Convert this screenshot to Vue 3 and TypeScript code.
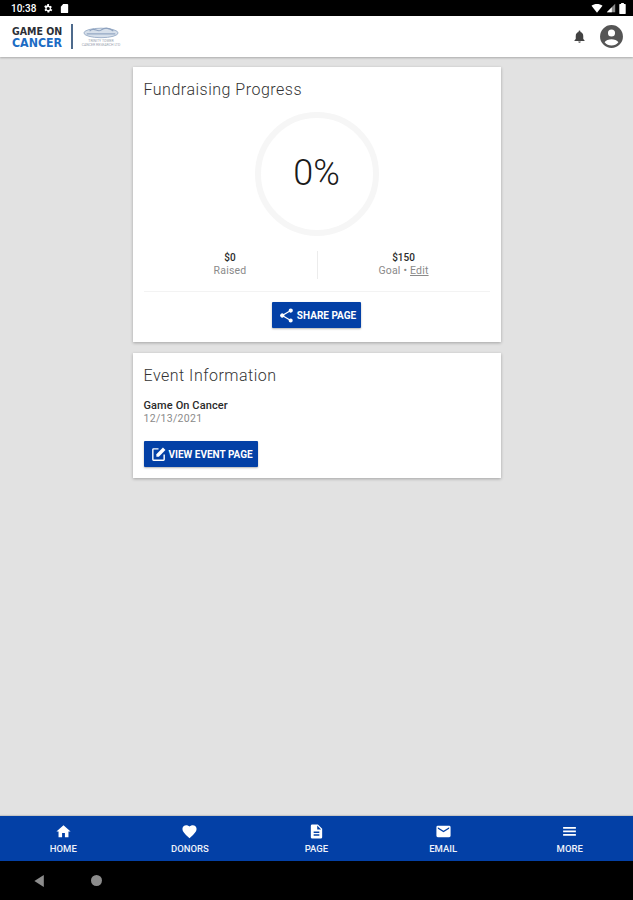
<template>
  <div class="screen">
    <div class="status-bar">
      <span class="clock">10:38</span>
      <svg class="status-icon" viewBox="0 0 24 24" width="11" height="11">
        <path fill="#fff" d="M19.4 13c0-.3.1-.6.1-1s0-.7-.1-1l2.100-1.600-2-3.500-2.500 1c-.5-.4-1.100-.7-1.700-1L15.500 2.300h-4l-.4 2.600c-.6.3-1.200.6-1.700 1l-2.500-1-2 3.500L7.500 11c0 .3-.1.600-.1 1s0 .7.100 1l-2.100 1.600 2 3.500 2.500-1c.5.4 1.100.7 1.700 1l.4 2.600h4l.4-2.600c.6-.3 1.200-.6 1.700-1l2.500 1 2-3.500zM13.500 15.500a3.500 3.500 0 1 1 0-7 3.500 3.500 0 0 1 0 7z" />
      </svg>
      <svg class="status-icon" viewBox="0 0 24 24" width="11" height="11">
        <path fill="#fff" d="M9 2h9a2 2 0 0 1 2 2v16a2 2 0 0 1-2 2H6a2 2 0 0 1-2-2V8z" />
      </svg>
      <span class="status-right">
        <svg viewBox="0 0 24 24" width="12" height="11">
          <path fill="#fff" d="M12 21 0 6c3.300-2.600 7.500-4 12-4s8.700 1.400 12 4z" />
        </svg>
        <svg viewBox="0 0 24 24" width="10" height="10">
          <path fill="#8a8a8a" d="M22 2v20H2z" />
          <path fill="#fff" d="M14 10v12H2z" />
        </svg>
        <svg viewBox="0 0 14 24" width="7" height="11">
          <path fill="#fff" d="M4 0h6v2h3a1 1 0 0 1 1 1v20a1 1 0 0 1-1 1H1a1 1 0 0 1-1-1V3a1 1 0 0 1 1-1h3z" />
        </svg>
      </span>
    </div>

    <header class="app-bar">
      <div class="logo">
        <div class="logo-words">
          <div class="logo-game">GAME ON</div>
          <div class="logo-cancer">CANCER</div>
        </div>
        <span class="logo-rule"></span>
        <div class="logo-partner">
          <svg viewBox="0 0 40 14" width="38" height="14">
            <ellipse cx="20" cy="8" rx="18" ry="5" fill="#d6dfea" stroke="#9db0c9" stroke-width="1" />
            <path d="M8 6c5-5 8 2 12-1s8-3 13 1" fill="none" stroke="#8ea2bf" stroke-width="1.200" />
            <path d="M5 9h30" stroke="#8097b7" stroke-width="1" />
          </svg>
          <div class="logo-small">TRINITY TOWER</div>
          <div class="logo-small">CANCER RESEARCH LTD</div>
        </div>
      </div>
      <div class="bar-actions">
        <svg viewBox="0 0 24 24" width="15" height="15">
          <path fill="#424242" d="M12 22a2 2 0 0 0 2-2h-4a2 2 0 0 0 2 2zm6-6v-5c0-3.100-1.600-5.600-4.500-6.300V4a1.500 1.500 0 0 0-3 0v.7C7.600 5.400 6 7.900 6 11v5l-2 2v1h16v-1z" />
        </svg>
        <svg viewBox="0 0 24 24" width="25" height="25">
          <path fill="#555" d="M12 1a11 11 0 1 0 0 22 11 11 0 0 0 0-22zm0 4.300a3.400 3.400 0 1 1 0 6.800 3.400 3.400 0 0 1 0-6.800zm0 15.300a8.600 8.600 0 0 1-6.600-3.100c.9-1.800 4.100-2.800 6.600-2.800s5.700 1 6.600 2.800a8.600 8.600 0 0 1-6.600 3.100z" />
        </svg>
      </div>
    </header>

    <main class="content">
      <section class="card">
        <h2 class="card-title">Fundraising Progress</h2>
        <div class="ring-wrap">
          <div class="ring">0%</div>
        </div>
        <div class="stats">
          <div class="stat">
            <div class="stat-value">$0</div>
            <div class="stat-label">Raised</div>
          </div>
          <div class="stat">
            <div class="stat-value">$150</div>
            <div class="stat-label">Goal • <span class="edit">Edit</span></div>
          </div>
        </div>
        <div class="share-row">
          <button class="btn">
            <svg viewBox="0 0 24 24" width="17" height="17">
              <path fill="#fff" d="M18 16.100c-.8 0-1.400.3-2 .8l-7.100-4.200c.1-.2.100-.5.100-.7s0-.5-.1-.7L16 7.200c.5.5 1.200.8 2 .8a3 3 0 1 0-3-3c0 .2 0 .5.100.7L8 9.800A3 3 0 1 0 8 14.200l7.100 4.200c-.1.200-.1.400-.1.600a2.900 2.900 0 1 0 3-2.900z" />
            </svg>
            <span>SHARE PAGE</span>
          </button>
        </div>
      </section>

      <section class="card card-event">
        <h2 class="card-title">Event Information</h2>
        <div class="event-name">Game On Cancer</div>
        <div class="event-date">12/13/2021</div>
        <button class="btn btn-event">
          <svg viewBox="0 0 24 24" width="17" height="17">
            <path fill="#fff" d="M19 19H5V5h7V3H5a2 2 0 0 0-2 2v14a2 2 0 0 0 2 2h14a2 2 0 0 0 2-2v-7h-2z" />
            <path fill="#fff" d="M9 15v-3.500L18.300 2.200l3.500 3.500L12.500 15z" />
          </svg>
          <span>VIEW EVENT PAGE</span>
        </button>
      </section>
    </main>

    <nav class="bottom-nav">
      <div v-for="item in navItems" :key="item.label" class="nav-item">
        <svg viewBox="0 0 24 24" width="17" height="17">
          <path fill="#fff" :d="item.path" />
        </svg>
        <span>{{ item.label }}</span>
      </div>
    </nav>

    <div class="system-nav">
      <svg viewBox="0 0 12 14" width="11" height="12">
        <path fill="#8c8c8c" d="M11 0v14L0 7z" />
      </svg>
      <span class="home-dot"></span>
    </div>
  </div>
</template>

<script setup lang="ts">
const navItems = [
  { label: "HOME", path: "M10 20v-6h4v6h5v-8h3L12 3 2 12h3v8z" },
  {
    label: "DONORS",
    path: "M12 21.400 10.500 20C5.400 15.400 2 12.300 2 8.500 2 5.400 4.400 3 7.500 3c1.700 0 3.400.8 4.500 2.100C13.100 3.800 14.800 3 16.500 3 19.600 3 22 5.400 22 8.500c0 3.800-3.400 6.900-8.500 11.500z",
  },
  {
    label: "PAGE",
    path: "M14 2H6a2 2 0 0 0-2 2v16a2 2 0 0 0 2 2h12a2 2 0 0 0 2-2V8zm2 16H8v-2h8zm0-4H8v-2h8zm-3-5V3.500L18.500 9z",
  },
  {
    label: "EMAIL",
    path: "M20 4H4a2 2 0 0 0-2 2v12a2 2 0 0 0 2 2h16a2 2 0 0 0 2-2V6a2 2 0 0 0-2-2zm0 4-8 5-8-5V6l8 5 8-5z",
  },
  { label: "MORE", path: "M3 18h18v-2.500H3zm0-5h18v-2.500H3zM3 5.500V8h18V5.500z" },
]
</script>

<style scoped>
.screen {
  width: 633px;
  height: 900px;
  display: flex;
  flex-direction: column;
  overflow: hidden;
  background: #e2e2e2;
  font-family: Roboto, "Liberation Sans", sans-serif;
}

.status-bar {
  height: 16px;
  flex: none;
  display: flex;
  align-items: center;
  gap: 6px;
  padding: 0 7px 0 11px;
  background: #000;
  color: #fff;
}

.clock {
  font-size: 10px;
  font-weight: 500;
}

.status-right {
  margin-left: auto;
  display: flex;
  align-items: center;
  gap: 3px;
}

.app-bar {
  height: 41px;
  flex: none;
  display: flex;
  align-items: center;
  justify-content: space-between;
  padding: 0 9px 0 12px;
  background: #fff;
  box-shadow: 0 1px 2px rgba(0, 0, 0, 0.25);
  position: relative;
}

.logo {
  display: flex;
  align-items: center;
}

.logo-words {
  font-family: "DejaVu Sans", sans-serif;
  font-stretch: condensed;
  font-weight: 700;
  line-height: 12px;
  width: 59px;
  white-space: nowrap;
}

.logo-game {
  color: #2b2f36;
  font-size: 10.500px;
}

.logo-cancer {
  color: #1c6cc4;
  font-size: 12.300px;
}

.logo-rule {
  width: 2px;
  height: 25px;
  margin-right: 6px;
  background: #4d6a8c;
}

.logo-partner {
  width: 44px;
  display: flex;
  flex-direction: column;
  align-items: center;
  margin-top: -1px;
}

.logo-small {
  font-size: 3.500px;
  line-height: 4px;
  color: #9aa3b0;
  white-space: nowrap;
}

.bar-actions {
  display: flex;
  align-items: center;
  gap: 12px;
}

.content {
  flex: 1;
  display: flex;
  flex-direction: column;
  align-items: center;
  gap: 11px;
  padding-top: 10px;
}

.card {
  width: 368px;
  height: 275px;
  box-sizing: border-box;
  padding: 13px 11px 0;
  background: #fff;
  box-shadow: 0 1px 3px rgba(0, 0, 0, 0.28);
}

.card-event {
  height: 125px;
}

.card-title {
  margin: 0;
  font-size: 16px;
  font-weight: 300;
  line-height: 20px;
  letter-spacing: 0.5px;
  color: #333;
}

.ring-wrap {
  display: flex;
  justify-content: center;
  margin-top: 12px;
}

.ring {
  width: 124px;
  height: 124px;
  box-sizing: border-box;
  display: flex;
  align-items: center;
  justify-content: center;
  padding-bottom: 2px;
  border: 6px solid #f6f6f6;
  border-radius: 50%;
  font-size: 36px;
  font-weight: 300;
  color: #1a1a1a;
}

.stats {
  display: grid;
  grid-template-columns: 1fr 1fr;
  margin-top: 15px;
  padding-bottom: 12px;
  border-bottom: 1px solid #f3f3f3;
  text-align: center;
}

.stat {
  height: 28px;
  font-size: 10px;
  line-height: 13px;
}

.stat + .stat {
  border-left: 1px solid #ececec;
}

.stat-value,
.event-name {
  font-weight: 500;
  color: #2a2a2a;
}

.stat-label {
  font-size: 10.500px;
  color: #8a8a8a;
  letter-spacing: 0.2px;
}

.edit {
  text-decoration: underline;
}

.share-row {
  display: flex;
  justify-content: center;
  margin-top: 10px;
}

.btn {
  height: 26px;
  display: flex;
  align-items: center;
  gap: 2px;
  padding: 0 5px 0 6px;
  border: 0;
  border-radius: 1px;
  background: #0340a6;
  box-shadow: 0 1px 2px rgba(0, 0, 0, 0.3);
  color: #fff;
  font-family: inherit;
  font-size: 10px;
  font-weight: 700;
}

.event-name {
  margin-top: 13px;
  font-size: 11px;
  line-height: 13px;
  letter-spacing: 0.1px;
}

.event-date {
  font-size: 10.500px;
  line-height: 13px;
  letter-spacing: 0.3px;
  color: #8a8a8a;
}

.btn-event {
  margin-top: 16px;
}

.bottom-nav {
  height: 45px;
  flex: none;
  display: grid;
  grid-template-columns: repeat(5, 1fr);
  background: #0340a6;
  box-shadow: 0 -1px 1px rgba(0, 0, 0, 0.12);
}

.nav-item {
  display: flex;
  flex-direction: column;
  align-items: center;
  padding-top: 7px;
  color: #eef2fa;
  font-size: 9.500px;
  font-weight: 500;
  line-height: 11px;
}

.nav-item span {
  margin-top: 3px;
}

.system-nav {
  height: 39px;
  flex: none;
  display: flex;
  align-items: center;
  gap: 46px;
  padding-left: 34px;
  background: #000;
}

.home-dot {
  width: 11px;
  height: 11px;
  border-radius: 50%;
  background: #8c8c8c;
}
</style>
